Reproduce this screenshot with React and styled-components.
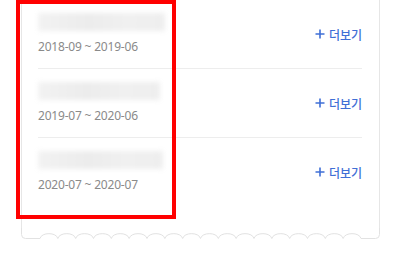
import React from "react";
import styled, { createGlobalStyle } from "styled-components";

const GlobalStyle = createGlobalStyle`
  html, body {
    margin: 0;
    padding: 0;
    background: #ffffff;
  }
  body {
    font-family: "Noto Sans", "Noto Sans CJK KR", sans-serif;
  }
`;

const Page = styled.div`
  position: relative;
  width: 400px;
  height: 266px;
  overflow: hidden;
`;

const Card = styled.div`
  margin: 0 20px 0 21px;
  width: 359px;
`;

const Body = styled.div`
  border-left: 1px solid #e6e6e6;
  border-right: 1px solid #e6e6e6;
  padding: 0 17px 22px 16px;
`;

const Row = styled.div`
  display: flex;
  align-items: center;
  justify-content: space-between;
  height: 68px;
  border-bottom: ${(p) => (p.$last ? "none" : "1px solid #ededed")};
`;

const Info = styled.div`
  display: flex;
  flex-direction: column;
  gap: 7px;
  padding-top: 1px;
`;

const Blurred = styled.div`
  width: ${(p) => p.$w}px;
  height: 18px;
  background: linear-gradient(90deg, #f2f2f2, #ececec 40%, #f0f0f0 70%, #eeeeee);
  filter: blur(2.5px);
`;

const Period = styled.span`
  font-size: 12px;
  line-height: 18px;
  color: #8a8a8a;
  letter-spacing: -0.2px;
`;

const MoreButton = styled.button`
  display: flex;
  align-items: center;
  gap: 4px;
  padding: 0;
  border: none;
  background: none;
  font-family: "Noto Sans CJK KR", sans-serif;
  font-size: 12px;
  font-weight: 500;
  color: #3f6fd6;
  cursor: pointer;
`;

const Frame = styled.div`
  position: absolute;
  left: 16px;
  top: 0;
  width: 160px;
  height: 219px;
  box-sizing: border-box;
  border: 4px solid #ff0000;
  pointer-events: none;
`;

const BottomEdge = styled.svg`
  display: block;
`;

function Plus() {
  return (
    <svg width="10" height="10" viewBox="0 0 10 10">
      <path d="M5 0.5V9.5M0.5 5H9.5" stroke="#3f6fd6" strokeWidth="1.6" />
    </svg>
  );
}

function Scallops() {
  const w = 359;
  const base = 10.5;
  const start = 19;
  const end = 340;
  const n = 18;
  const step = (end - start) / n;
  let d = `M0.5 0 V${base - 4} Q0.5 ${base} 4.5 ${base} H${start}`;
  for (let i = 0; i < n; i++) {
    const x = start + i * step;
    d += ` C${(x + 1.5).toFixed(2)} ${base - 6.5} ${(x + step - 1.5).toFixed(2)} ${base - 6.5} ${(x + step).toFixed(2)} ${base}`;
  }
  d += ` H${w - 4.5} Q${w - 0.5} ${base} ${w - 0.5} ${base - 4} V0`;
  return (
    <BottomEdge width={w} height="11" viewBox={`0 0 ${w} 11`}>
      <path d={d} fill="#ffffff" stroke="#e2e2e2" strokeWidth="1" />
    </BottomEdge>
  );
}

const items = [
  { period: "2018-09 ~ 2019-06", w: 127 },
  { period: "2019-07 ~ 2020-06", w: 122 },
  { period: "2020-07 ~ 2020-07", w: 125 },
];

export default function App() {
  return (
    <>
      <GlobalStyle />
      <Page>
        <Card>
          <Body>
            {items.map((it, i) => (
              <Row key={it.period} $last={i === items.length - 1}>
                <Info>
                  <Blurred $w={it.w} />
                  <Period>{it.period}</Period>
                </Info>
                <MoreButton>
                  <Plus />
                  더보기
                </MoreButton>
              </Row>
            ))}
          </Body>
          <Scallops />
        </Card>
        <Frame />
      </Page>
    </>
  );
}
